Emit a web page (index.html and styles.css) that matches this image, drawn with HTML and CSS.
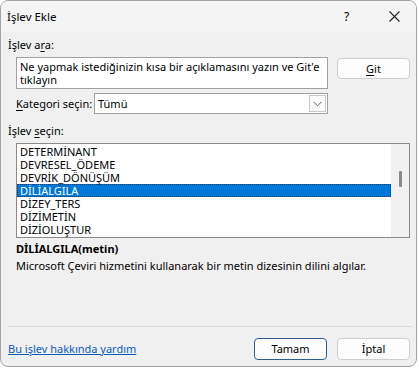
FILE: index.html
```html
<!DOCTYPE html>
<html lang="tr">
<head>
<meta charset="utf-8">
<title>İşlev Ekle</title>
<link rel="stylesheet" href="styles.css">
</head>
<body>
<div class="window">
  <div class="titlebar">
    <span class="title">İşlev Ekle</span>
    <span class="help">?</span>
    <span class="close"><svg width="11" height="11" viewBox="0 0 11 11"><path d="M0.5 0.5 L10.5 10.5 M10.5 0.5 L0.5 10.5" stroke="#222" stroke-width="1.1" fill="none"/></svg></span>
  </div>
  <div class="content">
    <div class="label">İşlev a<u>r</u>a:</div>
    <div class="search-row">
      <div class="textarea">Ne yapmak istediğinizin kısa bir açıklamasını yazın ve Git'e tıklayın</div>
      <button class="btn"><u>G</u>it</button>
    </div>
    <div class="cat-row">
      <span class="cat-label"><u>K</u>ategori seçin:</span>
      <div class="combo">
        <span class="combo-text">Tümü</span>
        <span class="combo-btn"><svg width="9" height="6" viewBox="0 0 9 6"><path d="M0.5 0.8 L4.5 4.8 L8.5 0.8" stroke="#666" stroke-width="1" fill="none"/></svg></span>
      </div>
    </div>
    <div class="label label2">İşlev <u>s</u>eçin:</div>
    <div class="listbox">
      <div class="items">
        <div class="item">DETERMİNANT</div>
        <div class="item">DEVRESEL_ÖDEME</div>
        <div class="item">DEVRİK_DÖNÜŞÜM</div>
        <div class="item selected">DİLİALGILA</div>
        <div class="item">DİZEY_TERS</div>
        <div class="item">DİZİMETİN</div>
        <div class="item">DİZİOLUŞTUR</div>
      </div>
      <div class="scrollbar"><div class="thumb"></div></div>
    </div>
    <div class="sig">DİLİALGILA(metin)</div>
    <div class="desc">Microsoft Çeviri hizmetini kullanarak bir metin dizesinin dilini algılar.</div>
    <div class="spacer"></div>
    <div class="separator"></div>
    <div class="footer">
      <a class="link" href="#">Bu işlev hakkında yardım</a>
      <div class="buttons">
        <button class="btn default">Tamam</button>
        <button class="btn">İptal</button>
      </div>
    </div>
  </div>
</div>
</body>
</html>
```
FILE: styles.css
```css
* { box-sizing: border-box; }
html, body { margin: 0; padding: 0; background: #ffffff; }
body {
  font-family: "Noto Sans", "Open Sans", sans-serif;
  font-size: 11px;
  color: #000;
  width: 419px;
  height: 369px;
  overflow: hidden;
}
.window {
  width: 417px;
  height: 367px;
  border: 1px solid #a3a3a3;
  border-radius: 8px;
  background: #f0f0f0;
  overflow: hidden;
  display: flex;
  flex-direction: column;
}
.titlebar {
  height: 31px;
  background: #f4f4f4;
  display: flex;
  align-items: center;
  padding-left: 6px;
  flex-shrink: 0;
}
.title { font-size: 11.5px; flex: 1; line-height: 16px; }
.help { font-size: 12px; width: 12px; margin-right: 33px; line-height: 16px; }
.close { width: 11px; height: 11px; margin-right: 16px; display: flex; }
.close svg { display: block; }
.content {
  flex: 1;
  display: flex;
  flex-direction: column;
  padding: 5px 6px 6px 7px;
}
.label { line-height: 16px; height: 16px; white-space: nowrap; }
u { text-decoration: underline; text-underline-offset: 2px; }
.search-row {
  display: flex;
  align-items: flex-start;
  margin-top: 4px;
  padding-left: 8px;
  gap: 9px;
}
.textarea {
  width: 312px;
  height: 32px;
  background: #fff;
  border: 1px solid #a0a0a0;
  padding: 2px 3px;
  line-height: 13px;
}
.btn {
  font-family: inherit;
  font-size: 11px;
  color: #000;
  width: 73px;
  height: 21px;
  margin-top: 1px;
  background: #fdfdfd;
  border: 1px solid #cfcfcf;
  border-radius: 4px;
  padding: 0;
  line-height: 17px;
}
.btn.default { border-color: #2f5f90; }
.cat-row {
  display: flex;
  align-items: center;
  margin-top: 4px;
  padding-left: 8px;
}
.cat-label { width: 78px; line-height: 16px; white-space: nowrap; }
.combo {
  width: 234px;
  height: 21px;
  background: #fff;
  border: 1px solid #a0a0a0;
  display: flex;
  align-items: stretch;
}
.combo-text { flex: 1; padding-left: 3px; line-height: 19px; }
.combo-btn {
  width: 17px;
  border: 1px solid #c8c8c8;
  margin: 1px;
  background: #fbfbfb;
  display: flex;
  align-items: center;
  justify-content: center;
}
.label2 { margin-top: 9px; }
.listbox {
  margin-top: 4px;
  margin-left: 8px;
  height: 95px;
  background: #fff;
  border: 1px solid #8a8a8a;
  display: flex;
  flex-shrink: 0;
}
.items { flex: 1; padding-top: 1px; overflow: hidden; }
.item {
  height: 13px;
  line-height: 13px;
  padding-left: 3px;
  white-space: nowrap;
}
.item.selected {
  background: #0078d7;
  color: #fff;
  outline: 1px dotted #1c3b5e;
  outline-offset: -1px;
}
.scrollbar {
  width: 18px;
  background: #f1f1f1;
  position: relative;
}
.thumb {
  position: absolute;
  left: 8px;
  top: 27px;
  width: 3px;
  height: 16px;
  background: #8a8a8a;
  border-radius: 1px;
}
.sig {
  margin-top: 3px;
  padding-left: 8px;
  font-weight: bold;
  line-height: 16px;
}
.desc {
  margin-top: 1px;
  padding-left: 8px;
  line-height: 16px;
}
.spacer { flex: 1; }
.separator {
  height: 1px;
  background: #d9d9d9;
  margin-right: -2px;
}
.footer {
  display: flex;
  align-items: center;
  justify-content: space-between;
  margin-top: 11px;
}
.link {
  color: #0a5cbd;
  text-decoration: underline;
  line-height: 16px;
}
.buttons { display: flex; gap: 10px; }
.buttons .btn { height: 22px; width: 73px; margin-top: 0; line-height: 18px; }
```
